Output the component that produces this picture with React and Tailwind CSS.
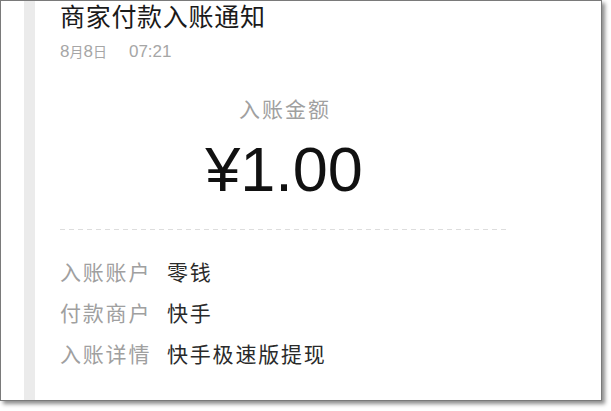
const rows = [
  { label: '入账账户', value: '零钱' },
  { label: '付款商户', value: '快手' },
  { label: '入账详情', value: '快手极速版提现' },
]

const cjk = "font-['Liberation_Sans','Noto_Sans_CJK_SC',sans-serif]"

export default function App() {
  return (
    <div className="w-[611px] h-[411px] bg-white">
      <div className="w-[602px] h-[401px] border border-[#7a7a7a] shadow-[3px_3px_4px_rgba(0,0,0,0.45)] bg-white flex">
        <div className="w-[23px] shrink-0" />
        <div className="w-[11px] shrink-0 bg-[#ebebeb]" />
        <div className={`flex-1 pl-[25px] ${cjk}`}>
          <div className="w-[448px] flex flex-col">
            {/* Header */}
            <div className="pt-[4px] text-[25px] leading-[25px] tracking-[0.7px] text-[#1a1a1a]">商家付款入账通知</div>
            <div className="mt-[14px] h-[16px] flex items-center text-[#a6a6a6]">
              <span className="text-[17px] leading-[16px]">8</span>
              <span className="text-[14px] leading-[16px]">月</span>
              <span className="text-[17px] leading-[16px]">8</span>
              <span className="text-[14px] leading-[16px]">日</span>
              <span className="text-[17px] leading-[16px] ml-[22px]">07:21</span>
            </div>

            {/* Amount */}
            <div className="mt-[40px] pl-[2px] text-center text-[21px] leading-[20px] tracking-[2px] text-[#a0a0a0]">入账金额</div>
            <div className="mt-[18px] text-center text-[63px] leading-[63px] text-[#111]">¥1.00</div>

            <div className="mt-[28px] h-px bg-[linear-gradient(to_right,#dddddd_55%,transparent_55%)] bg-[length:9px_1px]" />

            {/* Details */}
            <div className="mt-[33px] flex flex-col gap-[21px]">
              {rows.map(r => (
                <div key={r.label} className="flex text-[21px] leading-[20px] tracking-[1.8px]">
                  <span className="w-[107px] shrink-0 text-[#a0a0a0]">{r.label}</span>
                  <span className="text-[#2a2a2a]">{r.value}</span>
                </div>
              ))}
            </div>
          </div>
        </div>
      </div>
    </div>
  )
}
